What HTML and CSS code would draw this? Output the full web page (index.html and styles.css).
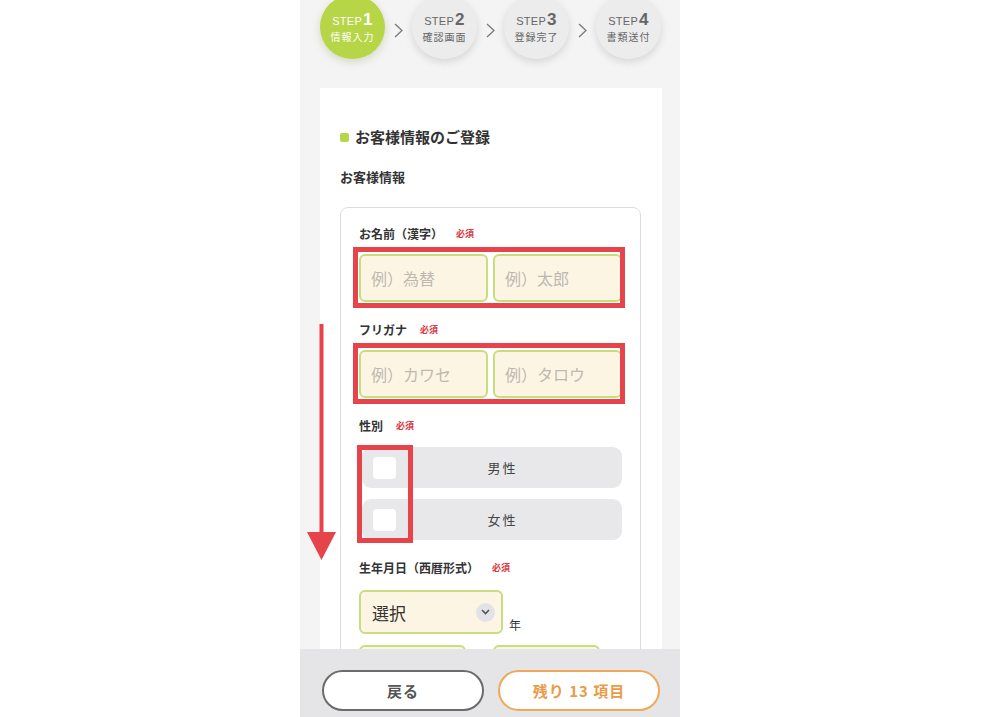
FILE: index.html
```html
<!DOCTYPE html>
<html lang="ja">
<head>
<meta charset="utf-8">
<title>お客様情報のご登録</title>
<link rel="stylesheet" href="styles.css">
</head>
<body>
<div class="phone">

	<!-- steps -->
	<ol class="steps">
		<li class="step step-current"><span class="step-no">STEP<b>1</b></span><span class="step-name">情報入力</span></li>
		<li class="step-sep"><svg width="9" height="15" viewBox="0 0 9 15"><polyline points="1,1 8,7.5 1,14" fill="none" stroke="#7a7a7a" stroke-width="1.3"/></svg></li>
		<li class="step"><span class="step-no">STEP<b>2</b></span><span class="step-name">確認画面</span></li>
		<li class="step-sep"><svg width="9" height="15" viewBox="0 0 9 15"><polyline points="1,1 8,7.5 1,14" fill="none" stroke="#7a7a7a" stroke-width="1.3"/></svg></li>
		<li class="step"><span class="step-no">STEP<b>3</b></span><span class="step-name">登録完了</span></li>
		<li class="step-sep"><svg width="9" height="15" viewBox="0 0 9 15"><polyline points="1,1 8,7.5 1,14" fill="none" stroke="#7a7a7a" stroke-width="1.3"/></svg></li>
		<li class="step"><span class="step-no">STEP<b>4</b></span><span class="step-name">書類送付</span></li>
	</ol>

	<!-- form -->
	<div class="card">
		<h2 class="card-title">お客様情報のご登録</h2>
		<h3 class="section-title">お客様情報</h3>

		<div class="form-box">
			<div class="field">
				<div class="field-label">お名前（漢字）<span class="req">必須</span></div>
				<div class="pair">
					<input class="text-input" type="text" placeholder="例）為替">
					<input class="text-input" type="text" placeholder="例）太郎">
					<span class="mark"></span>
				</div>
			</div>

			<div class="field">
				<div class="field-label">フリガナ<span class="req">必須</span></div>
				<div class="pair">
					<input class="text-input" type="text" placeholder="例）カワセ">
					<input class="text-input" type="text" placeholder="例）タロウ">
					<span class="mark"></span>
				</div>
			</div>

			<div class="field">
				<div class="field-label">性別<span class="req">必須</span></div>
				<div class="choices">
					<div class="choice"><span class="box"></span><span class="choice-label">男性</span></div>
					<div class="choice"><span class="box"></span><span class="choice-label">女性</span></div>
					<span class="mark"></span>
				</div>
			</div>

			<div class="field">
				<div class="field-label">生年月日（西暦形式）<span class="req">必須</span></div>
				<div class="date-row">
					<div class="select select-year">選択<span class="chev"><svg width="9" height="6" viewBox="0 0 9 6"><polyline points="1,1 4.5,4.5 8,1" fill="none" stroke="#555" stroke-width="1.6"/></svg></span></div>
					<span class="unit">年</span>
				</div>
				<!-- month / day, scrolled under the bottom bar -->
				<div class="date-row date-row-md">
					<div class="select select-small"></div>
					<div class="select select-small"></div>
				</div>
			</div>
		</div>
	</div>

	<!-- bottom buttons -->
	<div class="bottom-bar">
		<button class="btn btn-back">戻る</button>
		<button class="btn btn-next">残り 13 項目</button>
	</div>

	<!-- scroll arrow -->
	<svg class="arrow" width="34" height="240" viewBox="0 0 34 240">
		<line x1="16.5" y1="0" x2="16.5" y2="212" stroke="#e6434b" stroke-width="4"/>
		<polygon points="2,208 31,208 16.5,236" fill="#e6434b"/>
	</svg>
</div>
</body>
</html>
```

FILE: styles.css
```css
body {
	margin: 0;
	background: #fff;
	font-family: "Noto Sans CJK JP", "Noto Sans", sans-serif;
	color: #333;
}

.phone {
	position: relative;
	width: 380px;
	height: 717px;
	margin-left: 300px;
	background: #f4f4f5;
	overflow: hidden;
}

/* steps */
.steps {
	list-style: none;
	margin: 0;
	padding: 0 0 0 20px;
	height: 88px;
	display: flex;
	align-items: flex-start;
}

.step {
	width: 65px;
	height: 64px;
	margin-top: -5px;
	border-radius: 50%;
	background: #ececed;
	box-shadow: 0 3px 8px rgba(0, 0, 0, 0.13);
	display: flex;
	flex-direction: column;
	align-items: center;
	justify-content: center;
	color: #666;
}

.step-current {
	background: #b6d547;
	color: #fff;
	box-shadow: 0 3px 8px rgba(110, 140, 30, 0.25);
}

.step-no {
	font-family: "Liberation Sans", sans-serif;
	font-size: 11px;
	line-height: 17px;
	letter-spacing: 0.3px;
}

.step-no b {
	font-size: 17px;
	line-height: 17px;
	margin-left: 1px;
}

.step-name {
	font-size: 10px;
	line-height: 13px;
	letter-spacing: 1px;
}

.step-sep {
	width: 27px;
	height: 60px;
	display: flex;
	align-items: center;
	justify-content: center;
}

/* card */
.card {
	width: 342px;
	margin-left: 20px;
	padding: 39px 21px 0 20px;
	box-sizing: border-box;
	background: #fff;
}

.card-title {
	margin: 0;
	font-size: 15px;
	line-height: 20px;
	font-weight: 700;
	display: flex;
	align-items: center;
	gap: 6px;
}

.card-title::before {
	content: "";
	flex: none;
	width: 9px;
	height: 9px;
	border-radius: 2px;
	background: #b6d547;
}

.section-title {
	margin: 21px 0 0;
	font-size: 13px;
	line-height: 18px;
	font-weight: 700;
}

.form-box {
	margin-top: 21px;
	border: 1px solid #dcdcdc;
	border-radius: 8px;
	padding: 18px 18px 60px;
}

.field + .field {
	margin-top: 20px;
}

.field-label {
	font-size: 12px;
	line-height: 16px;
	font-weight: 700;
	display: flex;
	align-items: center;
}

.req {
	margin-left: 13px;
	font-size: 9px;
	font-weight: 700;
	color: #d8383f;
}

/* text inputs */
.pair {
	position: relative;
	margin-top: 12px;
	display: flex;
	gap: 5px;
}

.text-input {
	flex: 1;
	width: 0;
	height: 48px;
	box-sizing: border-box;
	padding: 0 10px;
	border: 2px solid #c6df7c;
	border-radius: 6px;
	background: #fdf5e3;
	font-family: "Noto Sans CJK JP", sans-serif;
	font-size: 16px;
	color: #333;
}

.text-input::placeholder {
	color: #bdb9b1;
}

.mark {
	position: absolute;
	box-sizing: border-box;
	border: 5px solid #e6434b;
	pointer-events: none;
}

.pair .mark {
	top: -7px;
	bottom: -6px;
	left: -6px;
	right: -3px;
}

/* gender */
.choices {
	position: relative;
	margin: 13px 0 0 3px;
	display: flex;
	flex-direction: column;
	gap: 11px;
}

.choice {
	height: 41px;
	padding: 0 13px 0 11px;
	border-radius: 9px;
	background: #e8e8ea;
	display: flex;
	align-items: center;
}

.box {
	width: 23px;
	height: 22px;
	border-radius: 4px;
	background: #fff;
}

.choice-label {
	flex: 1;
	text-align: center;
	font-size: 13px;
	letter-spacing: 2px;
	color: #444;
}

.choices .mark {
	top: -2px;
	left: -5px;
	width: 56px;
	height: 98px;
}

/* birthday */
.date-row {
	margin-top: 14px;
	display: flex;
	align-items: flex-end;
	gap: 6px;
}

.date-row-md {
	margin-top: 11px;
	gap: 27px;
}

.select {
	height: 44px;
	box-sizing: border-box;
	padding: 0 6px 0 11px;
	border: 2px solid #c6df7c;
	border-radius: 6px;
	background: #fdf5e3;
	display: flex;
	align-items: center;
	justify-content: space-between;
	font-size: 17px;
}

.select-year {
	width: 144px;
}

.select-small {
	width: 107px;
}

.chev {
	width: 19px;
	height: 19px;
	border-radius: 50%;
	background: #e3e3e7;
	display: flex;
	align-items: center;
	justify-content: center;
}

.unit {
	font-size: 12px;
	line-height: 16px;
	margin-bottom: 1px;
}

/* bottom bar */
.bottom-bar {
	position: absolute;
	left: 0;
	right: 0;
	bottom: 0;
	height: 68px;
	box-sizing: border-box;
	padding: 21px 20px 0 22px;
	background: #e5e5e7;
	display: flex;
	gap: 14px;
}

.btn {
	flex: 1;
	height: 41px;
	border: 2px solid #6b6b6b;
	border-radius: 21px;
	background: #fff;
	font-family: "Noto Sans CJK JP", sans-serif;
	font-size: 15px;
	font-weight: 700;
	color: #555;
	letter-spacing: 1px;
}

.btn-next {
	border-color: #f0a85a;
	color: #eb9a48;
}

.arrow {
	position: absolute;
	left: 5px;
	top: 324px;
}
```
